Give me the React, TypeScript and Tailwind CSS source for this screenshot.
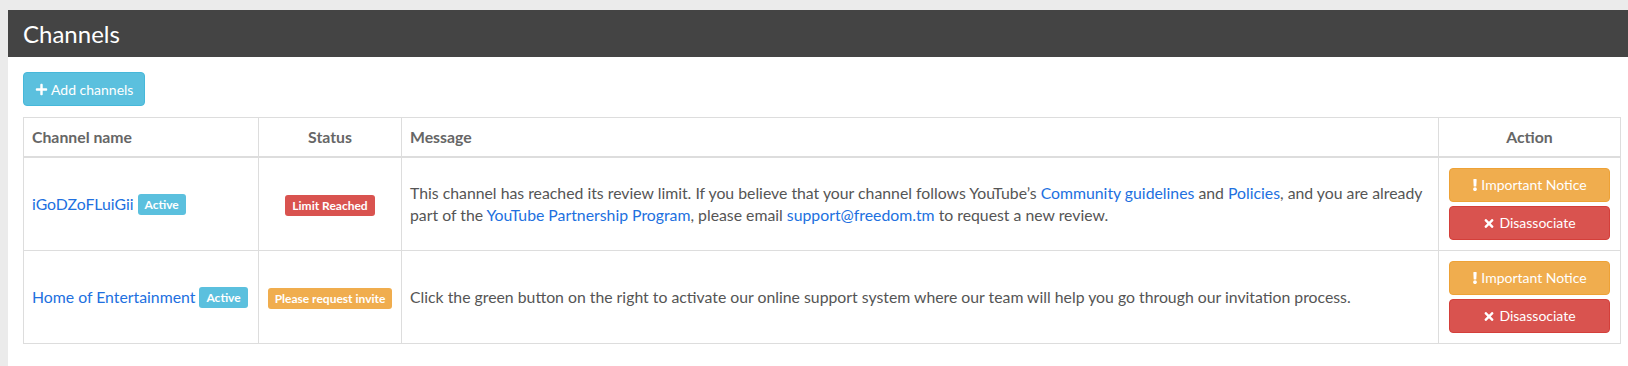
import { FaPlus, FaExclamation, FaTimes } from 'react-icons/fa';

interface ChannelRow {
  name: string;
  status: 'limit' | 'invite';
}

const rows: ChannelRow[] = [
  { name: 'iGoDZoFLuiGii', status: 'limit' },
  { name: 'Home of Entertainment', status: 'invite' },
];

function StatusLabel({ status }: { status: ChannelRow['status'] }) {
  if (status === 'limit') {
    return (
      <span className="inline-block rounded-[3px] bg-[#d9534f] px-[7px] py-[3px] text-[12px] font-bold leading-[15px] text-white">
        Limit Reached
      </span>
    );
  }
  return (
    <span className="inline-block rounded-[3px] bg-[#f0ad4e] px-[7px] py-[3px] text-[12px] font-bold leading-[15px] text-white">
      Please request invite
    </span>
  );
}

function Message({ status }: { status: ChannelRow['status'] }) {
  if (status === 'limit') {
    return (
      <>
        This channel has reached its review limit. If you believe that your channel follows YouTube’s{' '}
        <a className="text-[#2170e0]">Community guidelines</a> and <a className="text-[#2170e0]">Policies</a>, and you
        are already part of the <a className="text-[#2170e0]">YouTube Partnership Program</a>, please email{' '}
        <a className="text-[#2170e0]">support@freedom.tm</a> to request a new review.
      </>
    );
  }
  return (
    <>
      Click the green button on the right to activate our online support system where our team will help you go
      through our invitation process.
    </>
  );
}

export default function App() {
  return (
    <div className="min-h-[366px] bg-[#ebebeb] pt-[10px] pl-2 font-['Lato','Liberation_Sans',sans-serif]">
      <div className="min-h-[356px] bg-white">
        <div className="flex h-[47px] items-center bg-[#444444] px-[15px]">
          <h1 className="text-[24px] leading-none text-white">Channels</h1>
        </div>

        <div className="pl-[15px] pr-[7px] pt-[15px]">
          <button className="flex h-[34px] items-center gap-[3px] rounded-[4px] border border-[#46b8da] bg-[#5bc0de] px-[11px] text-[14px] text-white">
            <FaPlus className="h-[13px] w-[13px]" />
            Add channels
          </button>

          <table className="mt-[11px] w-full table-fixed border-collapse border border-[#dddddd] text-[15.8px] leading-[22px] text-[#555555]">
            <colgroup>
              <col className="w-[235px]" />
              <col className="w-[143px]" />
              <col />
              <col className="w-[182px]" />
            </colgroup>
            <thead>
              <tr className="border-b-2 border-[#dddddd] text-[#666666]">
                <th className="border-r border-[#dddddd] px-2 py-[8px] text-left font-bold">Channel name</th>
                <th className="border-r border-[#dddddd] px-2 py-[8px] text-center font-bold">Status</th>
                <th className="border-r border-[#dddddd] px-2 py-[8px] text-left font-bold">Message</th>
                <th className="px-2 py-[8px] text-center font-bold">Action</th>
              </tr>
            </thead>
            <tbody>
              {rows.map((row) => (
                <tr key={row.name} className="border-b border-[#dddddd]">
                  <td className="border-r border-[#dddddd] px-2 align-middle">
                    <a className="text-[#2170e0]">{row.name}</a>{' '}
                    <span className="inline-block rounded-[3px] bg-[#5bc0de] px-[7px] py-[3px] align-[1px] text-[12px] font-bold leading-[15px] text-white">
                      Active
                    </span>
                  </td>
                  <td className="border-r border-[#dddddd] px-2 text-center align-middle">
                    <StatusLabel status={row.status} />
                  </td>
                  <td className="border-r border-[#dddddd] pl-2 pr-[6px] align-middle">
                    <Message status={row.status} />
                  </td>
                  <td className="px-[10px] py-[10px] align-middle">
                    <div className="flex flex-col gap-1">
                      <button className="flex h-[34px] items-center justify-center gap-[3px] rounded-[4px] border border-[#eea236] bg-[#f0ad4e] text-[14px] text-white">
                        <FaExclamation className="h-[12px] w-[6px]" />
                        Important Notice
                      </button>
                      <button className="flex h-[34px] items-center justify-center gap-[4px] rounded-[4px] border border-[#d43f3a] bg-[#d9534f] text-[14px] text-white">
                        <FaTimes className="h-[13px] w-[12px]" />
                        Disassociate
                      </button>
                    </div>
                  </td>
                </tr>
              ))}
            </tbody>
          </table>
        </div>
      </div>
    </div>
  );
}
